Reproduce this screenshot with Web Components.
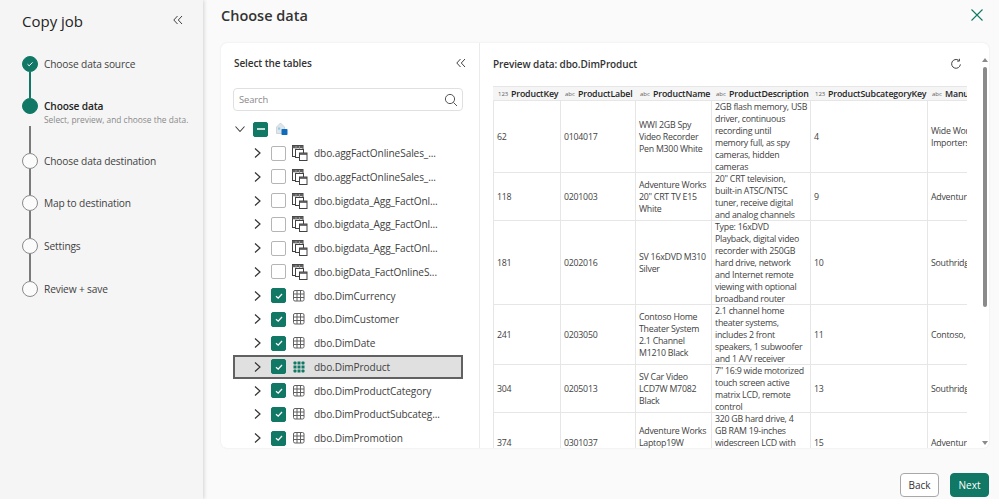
<!DOCTYPE html>
<html lang="en">
<head>
<meta charset="utf-8">
<title>Copy job</title>
<style>
  html, body { margin: 0; height: 100%; overflow: hidden; }
  body { font-family: "Open Sans", "Noto Sans", sans-serif; color: #242424; background: #fafafa; }
</style>
</head>
<body>
<copy-job>
  <wizard-steps slot="side">
    <wizard-step state="done" label="Choose data source"></wizard-step>
    <wizard-step state="current" label="Choose data" note="Select, preview, and choose the data."></wizard-step>
    <wizard-step label="Choose data destination"></wizard-step>
    <wizard-step label="Map to destination"></wizard-step>
    <wizard-step label="Settings"></wizard-step>
    <wizard-step label="Review + save" last></wizard-step>
  </wizard-steps>

  <table-picker slot="left">
    <tree-row root checked="mixed"></tree-row>
    <tree-row kind="stack" label="dbo.aggFactOnlineSales_..."></tree-row>
    <tree-row kind="stack" label="dbo.aggFactOnlineSales_..."></tree-row>
    <tree-row kind="stack" label="dbo.bigdata_Agg_FactOnl..."></tree-row>
    <tree-row kind="stack" label="dbo.bigdata_Agg_FactOnl..."></tree-row>
    <tree-row kind="stack" label="dbo.bigdata_Agg_FactOnl..."></tree-row>
    <tree-row kind="stack" label="dbo.bigData_FactOnlineS..."></tree-row>
    <tree-row checked="yes" label="dbo.DimCurrency"></tree-row>
    <tree-row checked="yes" label="dbo.DimCustomer"></tree-row>
    <tree-row checked="yes" label="dbo.DimDate"></tree-row>
    <tree-row checked="yes" selected label="dbo.DimProduct"></tree-row>
    <tree-row checked="yes" label="dbo.DimProductCategory"></tree-row>
    <tree-row checked="yes" label="dbo.DimProductSubcateg..."></tree-row>
    <tree-row checked="yes" label="dbo.DimPromotion"></tree-row>
  </table-picker>

  <preview-pane slot="right" heading="Preview data: dbo.DimProduct">
    <data-grid></data-grid>
  </preview-pane>
</copy-job>

<script>
const chevrons = `<svg width="12" height="12" viewBox="0 0 12 12" fill="none" stroke="#424242" stroke-width="1"><path d="M5.5 2 1.8 6l3.7 4M10 2 6.3 6l3.7 4"/></svg>`;

// shell: sidebar, title bar, the white card and the footer buttons
const shell = document.createElement('template');
shell.innerHTML = `
  <style>
    :host { display: flex; height: 499px; width: 999px; overflow: hidden; }
    aside {
      width: 203px; flex: none; box-sizing: border-box; padding: 11px 0 0 22px;
      background: #f5f5f5; box-shadow: 1px 0 4px rgba(0,0,0,.16); position: relative;
    }
    .side-head { display: flex; align-items: center; justify-content: space-between; height: 20px; padding-right: 19px; margin-bottom: 24.5px; }
    .side-head h1 { margin: 0; font-size: 15px; font-weight: 500; color: #242424; }
    .side-head svg { margin-top: -3px; }
    main { flex: 1; min-width: 0; box-sizing: border-box; padding: 0 10px 2px 18px; display: flex; flex-direction: column; }
    header { height: 43px; flex: none; display: flex; justify-content: space-between; padding-top: 6px; box-sizing: border-box; }
    header h2 { margin: 0; font-size: 14.5px; line-height: 20px; font-weight: 600; color: #333; }
    header svg { margin-top: 2px; margin-right: 5px; }
    .card {
      flex: 1; min-height: 0; display: flex; overflow: hidden; background: #fff;
      border-radius: 6px; box-shadow: 0 0 2px rgba(0,0,0,.1);
    }
    .left { width: 258px; flex: none; border-right: 1px solid #ebebeb; }
    .right { flex: 1; min-width: 0; }
    footer { flex: none; display: flex; justify-content: flex-end; gap: 11px; padding-top: 25px; }
    button {
      width: 39px; height: 24px; padding: 0; box-sizing: border-box; border-radius: 4px; font: inherit; font-size: 10px;
      border: 1px solid #a8a8a8; background: #fff; color: #333;
    }
    button.primary { border-color: #117865; background: #117865; color: #fff; }
  </style>
  <aside>
    <div class="side-head"><h1>Copy job</h1>${chevrons}</div>
    <slot name="side"></slot>
  </aside>
  <main>
    <header>
      <h2>Choose data</h2>
      <svg width="14" height="14" viewBox="0 0 14 14" fill="none" stroke="#117865" stroke-width="1.1"><path d="M1.5 1.5l11 11M12.5 1.5l-11 11"/></svg>
    </header>
    <div class="card">
      <div class="left"><slot name="left"></slot></div>
      <div class="right"><slot name="right"></slot></div>
    </div>
    <footer><button>Back</button><button class="primary">Next</button></footer>
  </main>
`;
class CopyJob extends HTMLElement {
  constructor() {
    super();
    this.attachShadow({ mode: 'open' }).appendChild(shell.content.cloneNode(true));
  }
}

class WizardSteps extends HTMLElement {
  constructor() {
    super();
    this.attachShadow({ mode: 'open' }).innerHTML = `
      <style>:host { display: flex; flex-direction: column; }</style>
      <slot></slot>`;
  }
}

class WizardStep extends HTMLElement {
  constructor() {
    super();
    const state = this.getAttribute('state') || '';
    const note = this.getAttribute('note');
    const tick = state === 'done'
      ? `<svg width="8" height="8" viewBox="0 0 8 8" fill="none" stroke="#fff" stroke-width="1"><path d="M1.5 4.2 3.2 5.8 6.5 2.4"/></svg>` : '';
    this.attachShadow({ mode: 'open' }).innerHTML = `
      <style>
        :host { display: grid; grid-template-columns: 16px 1fr; column-gap: 6px; height: ${note ? 55 : state === 'done' ? 42 : 42.9}px; }
        .rail { display: flex; flex-direction: column; align-items: center; }
        .dot { width: 16px; height: 16px; flex: none; box-sizing: border-box; border-radius: 50%; border: 1px solid #8a8a8a; background: #fbfbfb; display: flex; align-items: center; justify-content: center; }
        .line { flex: 1; width: 1.5px; background: #7a7a7a; }
        :host([state=done]) .dot, :host([state=current]) .dot { background: #117865; border-color: #117865; }
        :host([state=done]) .line { background: #117865; }
        :host([state=current]) .line { margin-top: 12px; }
        :host([last]) .line { display: none; }
        .label { font-size: 10.2px; letter-spacing: -.15px; line-height: 16px; color: #424242; }
        :host([state=current]) .label { font-weight: 600; color: #242424; }
        .note { font-size: 8.4px; line-height: 12px; margin-top: 0; color: #8a8a8a; white-space: nowrap; }
      </style>
      <div class="rail"><div class="dot">${tick}</div><div class="line"></div></div>
      <div><div class="label">${this.getAttribute('label')}</div>${note ? `<div class="note">${note}</div>` : ''}</div>`;
  }
}

const picker = document.createElement('template');
picker.innerHTML = `
  <style>
    :host { display: block; height: 100%; overflow: hidden; box-sizing: border-box; padding: 12px 16px 0 12px; }
    .head { display: flex; justify-content: space-between; align-items: center; height: 16px; padding: 0 0 0 1px; margin-right: -4px; margin-bottom: 17px; }
    .head span { font-size: 10px; letter-spacing: -.1px; font-weight: 600; color: #333; }
    .search {
      height: 23px; box-sizing: border-box; border: 1px solid #e0e0e0; border-radius: 4px;
      display: flex; align-items: center; justify-content: space-between; padding: 0 4px 0 5px;
      font-size: 9.4px; letter-spacing: -.1px; color: #8a8a8a; margin-bottom: 6.4px;
    }
    .tree { display: flex; flex-direction: column; }
  </style>
  <div class="head"><span>Select the tables</span>${chevrons}</div>
  <div class="search"><span>Search</span>
    <svg width="14" height="14" viewBox="0 0 14 14" fill="none" stroke="#555" stroke-width="1"><circle cx="6" cy="6" r="4.6"/><path d="M9.4 9.4l3.6 3.6"/></svg>
  </div>
  <div class="tree"><slot></slot></div>
`;
class TablePicker extends HTMLElement {
  constructor() {
    super();
    this.attachShadow({ mode: 'open' }).appendChild(picker.content.cloneNode(true));
  }
}

const stackIcon = `<svg width="16" height="16" viewBox="0 0 16 16" fill="none" stroke="#424242" stroke-width="1">
  <rect x=".5" y=".5" width="10.5" height="11"/><path d="M.5 2h10.5" stroke-width="2.4" stroke="#616161"/><path d="M4 1v3M7.5 1v3" stroke="#9a9a9a"/>
  <rect x="3.5" y="4.5" width="8" height="8" fill="#fff"/><rect x="7.5" y="8" width="7.5" height="7.5" fill="#fff"/><path d="M7.5 9h7.5" stroke-width="1.4"/></svg>`;
const gridIcon = `<svg width="14" height="14" viewBox="0 0 14 14" fill="none" stroke="#616161" stroke-width="1"><rect x="1.5" y="1.5" width="10.5" height="10.5" rx="1.5"/><path d="M5 1.5v10.5M8.5 1.5v10.5M1.5 5h10.5M1.5 8.5h10.5"/></svg>`;
const gridOnIcon = `<svg width="14" height="14" viewBox="0 0 14 14" fill="#117865"><rect x="1.5" y="1.5" width="3" height="3" rx=".8"/><rect x="5.5" y="1.5" width="3" height="3"/><rect x="9.5" y="1.5" width="3" height="3" rx=".8"/><rect x="1.5" y="5.5" width="3" height="3"/><rect x="5.5" y="5.5" width="3" height="3"/><rect x="9.5" y="5.5" width="3" height="3"/><rect x="1.5" y="9.5" width="3" height="3" rx=".8"/><rect x="5.5" y="9.5" width="3" height="3"/><rect x="9.5" y="9.5" width="3" height="3" rx=".8"/></svg>`;
const rootIcon = `<svg width="14" height="14" viewBox="0 0 14 14"><path d="M1.5 5 5.5 1 9.5 5v6.5h-8z" fill="#dfe6ea" stroke="#b8c4ca" stroke-width=".6"/><rect x="3" y="5.5" width="2.2" height="2.2" fill="#8fcdec"/><rect x="6.5" y="7" width="6" height="6" rx=".8" fill="#0f6cbd"/></svg>`;

class TreeRow extends HTMLElement {
  constructor() {
    super();
    const root = this.hasAttribute('root');
    const checked = this.getAttribute('checked');
    const on = !!checked;
    const box = checked === 'mixed'
      ? `<svg width="10" height="10" viewBox="0 0 10 10"><path d="M1 5h8" stroke="#fff" stroke-width="1.4"/></svg>`
      : checked ? `<svg width="10" height="10" viewBox="0 0 10 10" fill="none" stroke="#fff" stroke-width="1.3"><path d="M2 5.2 4.2 7.2 8 3"/></svg>` : '';
    let icon = this.getAttribute('kind') === 'stack' ? stackIcon : gridIcon;
    if (this.hasAttribute('selected')) icon = gridOnIcon;
    if (root) icon = rootIcon;
    const chevron = root
      ? `<svg width="12" height="12" viewBox="0 0 12 12" fill="none" stroke="#424242" stroke-width="1.1"><path d="M1.5 3.5 6 8.5l4.5-5"/></svg>`
      : `<svg width="12" height="12" viewBox="0 0 12 12" fill="none" stroke="#333" stroke-width="1.2"><path d="M4 1.5 9 6 4 10.5"/></svg>`;
    this.attachShadow({ mode: 'open' }).innerHTML = `
      <style>
        :host { display: flex; align-items: center; height: 23.75px; box-sizing: border-box; padding-left: ${root ? 1 : 18}px; gap: ${root ? 7 : 8}px; font-size: 10.1px; letter-spacing: -.1px; color: #424242; white-space: nowrap; }
        :host([selected]) { background: #e0e0e0; outline: 2px solid #616161; outline-offset: -2px; }
        .box { width: 15px; height: 15px; flex: none; box-sizing: border-box; border-radius: 2px; border: 1px solid #b5b5b5; display: flex; align-items: center; justify-content: center; background: ${on ? '#117865' : '#fff'}; ${on ? 'border-color:#117865;' : ''} }
        svg { flex: none; }
        .icon { display: flex; width: 16px; margin-left: ${root ? 0 : -2}px; }
        .name { margin-left: -2px; }
      </style>
      ${chevron}<span class="box">${box}</span><span class="icon">${icon}</span>
      ${root ? '' : `<span class="name">${this.getAttribute('label')}</span>`}`;
  }
}

class PreviewPane extends HTMLElement {
  constructor() {
    super();
    this.attachShadow({ mode: 'open' }).innerHTML = `
      <style>
        :host { display: flex; height: 100%; box-sizing: border-box; }
        .body { flex: 1; min-width: 0; display: flex; flex-direction: column; padding: 12px 0 0 13px; }
        .top { display: flex; justify-content: space-between; align-items: center; height: 18px; margin-bottom: 13px; padding-right: 20px; flex: none; }
        .top span { font-size: 10px; letter-spacing: -.1px; font-weight: 600; color: #333; }
        .wrap { flex: 1; min-height: 0; margin-right: 15px; overflow: hidden; }
        .bar { width: 6px; margin-right: 1px; padding: 14px 0 3px; display: flex; flex-direction: column; align-items: center; position: relative; box-sizing: border-box; }
        .thumb { width: 4px; height: 240px; margin-top: 10px; border-radius: 2px; background: #8a8a8a; }
        .arrow { position: absolute; left: 0; width: 0; height: 0; border-left: 3px solid transparent; border-right: 3px solid transparent; }
        .up { top: 15px; border-bottom: 4px solid #8a8a8a; }
        .down { bottom: 3px; border-top: 4px solid #8a8a8a; }
      </style>
      <div class="body">
        <div class="top"><span>${this.getAttribute('heading')}</span>
          <svg width="12" height="12" viewBox="0 0 12 12" fill="none" stroke="#424242" stroke-width="1"><path d="M10.4 6.4A4.4 4.4 0 1 1 8.6 2.3"/><path d="M8.8 .6v2.3H6.6" transform="translate(.6 .2)"/></svg>
        </div>
        <div class="wrap"><slot></slot></div>
      </div>
      <div class="bar"><span class="arrow up"></span><div class="thumb"></div><span class="arrow down"></span></div>`;
  }
}

const columns = [
  ['123', 'ProductKey', 67], ['abc', 'ProductLabel', 75], ['abc', 'ProductName', 76],
  ['abc', 'ProductDescription', 99], ['123', 'ProductSubcategoryKey', 117], ['abc', 'Manufacturer', 90]
];
const rows = [
  ['62', '0104017', 'WWI 2GB Spy\nVideo Recorder\nPen M300 White', '2GB flash memory, USB\ndriver, continuous\nrecording until\nmemory full, as spy\ncameras, hidden\ncameras', '4', 'Wide World\nImporters'],
  ['118', '0201003', 'Adventure Works\n20" CRT TV E15\nWhite', '20" CRT television,\nbuilt-in ATSC/NTSC\ntuner, receive digital\nand analog channels', '9', 'Adventure Works'],
  ['181', '0202016', 'SV 16xDVD M310\nSilver', 'Type: 16xDVD\nPlayback, digital video\nrecorder with 250GB\nhard drive, network\nand Internet remote\nviewing with optional\nbroadband router', '10', 'Southridge Video'],
  ['241', '0203050', 'Contoso Home\nTheater System\n2.1 Channel\nM1210 Black', '2.1 channel home\ntheater systems,\nincludes 2 front\nspeakers, 1 subwoofer\nand 1 A/V receiver', '11', 'Contoso, Ltd'],
  ['304', '0205013', 'SV Car Video\nLCD7W M7082\nBlack', '7" 16:9 wide motorized\ntouch screen active\nmatrix LCD, remote\ncontrol', '13', 'Southridge Video'],
  ['374', '0301037', 'Adventure Works\nLaptop19W\n ', '320 GB hard drive, 4\nGB RAM 19-inches\nwidescreen LCD with\n \n ', '15', 'Adventure Works']
];
const esc = s => s.replace(/&/g, '&amp;').replace(/</g, '&lt;');

class DataGrid extends HTMLElement {
  constructor() {
    super();
    this.attachShadow({ mode: 'open' }).innerHTML = `
      <style>
        :host { display: block; }
        table { border-collapse: separate; border-spacing: 0; table-layout: fixed; width: ${columns.reduce((a, c) => a + c[2], 0)}px; font-size: 8.8px; letter-spacing: -.25px; line-height: 12px; color: #424242; }
        th, td { box-sizing: border-box; overflow: hidden; white-space: pre; vertical-align: middle; font-weight: 400; }
        td { padding: 0 0 0 4px; box-shadow: inset 1px 0 #e6e6e6, inset 0 -1px #e6e6e6; }
        th { height: 15px; padding: 1px 0 0 5px; background: #f5f5f5; text-align: left; color: #242424; border-top: 1px solid #e6e6e6; border-bottom: 1px solid #e6e6e6; }
        th b { font-weight: 600; letter-spacing: -.15px; }
        th i { font-style: normal; font-size: 6px; letter-spacing: 0; color: #616161; display: inline-block; width: 13px; vertical-align: 1px; }
      </style>
      <table>
        <colgroup>${columns.map(c => `<col style="width:${c[2]}px">`).join('')}</colgroup>
        <thead><tr>${columns.map(c => `<th><i>${c[0]}</i><b>${c[1]}</b></th>`).join('')}</tr></thead>
        <tbody>${rows.map(r => `<tr>${r.map(v => `<td>${esc(v)}</td>`).join('')}</tr>`).join('')}</tbody>
      </table>`;
  }
}

customElements.define('copy-job', CopyJob);
customElements.define('wizard-steps', WizardSteps);
customElements.define('wizard-step', WizardStep);
customElements.define('table-picker', TablePicker);
customElements.define('tree-row', TreeRow);
customElements.define('preview-pane', PreviewPane);
customElements.define('data-grid', DataGrid);
</script>
</body>
</html>
